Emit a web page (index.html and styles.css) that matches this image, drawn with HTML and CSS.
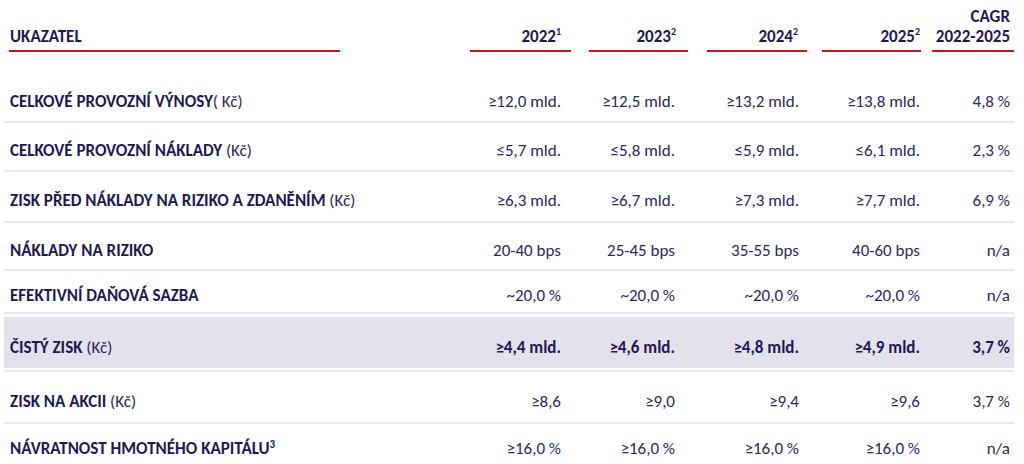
FILE: index.html
```html
<!DOCTYPE html>
<html lang="cs">
<head>
<meta charset="utf-8">
<title>Ukazatele 2022–2025</title>
<link rel="stylesheet" href="styles.css">
</head>
<body>
<div class="table">
  <div class="row head">
    <div class="cell label"><span class="uline">UKAZATEL</span></div>
    <div class="cell"><span class="uline">2022<sup>1</sup></span></div>
    <div class="cell"><span class="uline">2023<sup>2</sup></span></div>
    <div class="cell"><span class="uline">2024<sup>2</sup></span></div>
    <div class="cell"><span class="uline">2025<sup>2</sup></span></div>
    <div class="cell"><span class="uline">CAGR<br>2022-2025</span></div>
  </div>
  <div class="spacer"></div>
  <div class="row">
    <div class="cell label"><b>CELKOVÉ PROVOZNÍ VÝNOSY</b>( Kč)</div>
    <div class="cell">≥12,0 mld.</div>
    <div class="cell">≥12,5 mld.</div>
    <div class="cell">≥13,2 mld.</div>
    <div class="cell">≥13,8 mld.</div>
    <div class="cell">4,8 %</div>
  </div>
  <div class="row">
    <div class="cell label"><b>CELKOVÉ PROVOZNÍ NÁKLADY</b> (Kč)</div>
    <div class="cell">≤5,7 mld.</div>
    <div class="cell">≤5,8 mld.</div>
    <div class="cell">≤5,9 mld.</div>
    <div class="cell">≤6,1 mld.</div>
    <div class="cell">2,3 %</div>
  </div>
  <div class="row">
    <div class="cell label"><b>ZISK PŘED NÁKLADY NA RIZIKO A ZDANĚNÍM</b> (Kč)</div>
    <div class="cell">≥6,3 mld.</div>
    <div class="cell">≥6,7 mld.</div>
    <div class="cell">≥7,3 mld.</div>
    <div class="cell">≥7,7 mld.</div>
    <div class="cell">6,9 %</div>
  </div>
  <div class="row">
    <div class="cell label"><b>NÁKLADY NA RIZIKO</b></div>
    <div class="cell">20-40 bps</div>
    <div class="cell">25-45 bps</div>
    <div class="cell">35-55 bps</div>
    <div class="cell">40-60 bps</div>
    <div class="cell">n/a</div>
  </div>
  <div class="row">
    <div class="cell label"><b>EFEKTIVNÍ DAŇOVÁ SAZBA</b></div>
    <div class="cell">~20,0 %</div>
    <div class="cell">~20,0 %</div>
    <div class="cell">~20,0 %</div>
    <div class="cell">~20,0 %</div>
    <div class="cell">n/a</div>
  </div>
  <div class="spacer"></div>
  <div class="row highlight">
    <div class="cell label"><b>ČISTÝ ZISK</b> (Kč)</div>
    <div class="cell">≥4,4 mld.</div>
    <div class="cell">≥4,6 mld.</div>
    <div class="cell">≥4,8 mld.</div>
    <div class="cell">≥4,9 mld.</div>
    <div class="cell">3,7 %</div>
  </div>
  <div class="row">
    <div class="cell label"><b>ZISK NA AKCII</b> (Kč)</div>
    <div class="cell">≥8,6</div>
    <div class="cell">≥9,0</div>
    <div class="cell">≥9,4</div>
    <div class="cell">≥9,6</div>
    <div class="cell">3,7 %</div>
  </div>
  <div class="row last">
    <div class="cell label"><b>NÁVRATNOST HMOTNÉHO KAPITÁLU<sup>3</sup></b></div>
    <div class="cell">≥16,0 %</div>
    <div class="cell">≥16,0 %</div>
    <div class="cell">≥16,0 %</div>
    <div class="cell">≥16,0 %</div>
    <div class="cell">n/a</div>
  </div>
</div>
</body>
</html>
```
FILE: styles.css
```css
html, body {
  margin: 0;
  padding: 0;
  background: #ffffff;
}

body {
  font-family: Carlito, Calibri, Lato, "Open Sans", sans-serif;
  font-size: 17px;
  color: #2b2862;
}

.table {
  margin-left: 4px;
  width: 1010px;
  display: grid;
  grid-template-columns: 466px 119px 118px 115px 110px 82px;
  grid-template-rows: 52px 22px 49px 49px 51px 48px 43px 3px 55px 52px 40px;
}

.row {
  grid-column: 1 / -1;
  display: grid;
  grid-template-columns: subgrid;
  align-items: center;
  border-bottom: 2px solid #e8e8ef;
}

.row.last {
  border-bottom: none;
}

.spacer {
  grid-column: 1 / -1;
}

.cell {
  padding-top: 8px;
  text-align: right;
  white-space: nowrap;
}

.cell.label {
  text-align: left;
  padding-left: 6px;
}

b {
  font-weight: 700;
  color: #1e1954;
}

sup {
  font-size: 11px;
  line-height: 0;
  vertical-align: 6px;
}

/* per-column right edges of values */
.row .cell:nth-child(2) { padding-right: 28px; }
.row .cell:nth-child(3) { padding-right: 32px; }
.row .cell:nth-child(4) { padding-right: 23px; }
.row .cell:nth-child(5) { padding-right: 12px; }
.row .cell:nth-child(6) { padding-right: 4px; }

/* header */
.row.head {
  border-bottom: none;
  align-items: end;
  font-weight: 700;
  color: #1e1954;
}

.row.head .cell {
  padding: 0;
}

.row.head .cell.label {
  padding-left: 5px;
}

.uline {
  display: block;
  box-sizing: border-box;
  line-height: 20px;
  padding-bottom: 3px;
  border-bottom: 2px solid #c8141e;
  text-align: right;
}

.row.head .cell:nth-child(1) .uline { width: 331px; padding-left: 1px; text-align: left; }
.row.head .cell:nth-child(2) .uline { width: 101px; padding-right: 10px; }
.row.head .cell:nth-child(3) .uline { width: 99px; padding-right: 12px; }
.row.head .cell:nth-child(4) .uline { width: 100px; padding-right: 9px; }
.row.head .cell:nth-child(5) .uline { width: 99px; padding-right: 1px; }
.row.head .cell:nth-child(6) .uline { width: 82px; padding-right: 4px; }

.uline sup {
  font-size: 10px;
  vertical-align: 7px;
}

/* highlighted row */
.row.highlight {
  background: linear-gradient(#e3e1ec, #e3e1ec) top left / 100% 51px no-repeat;
}

.row.highlight .cell:not(.label) {
  font-weight: 700;
  color: #1e1954;
}
```
